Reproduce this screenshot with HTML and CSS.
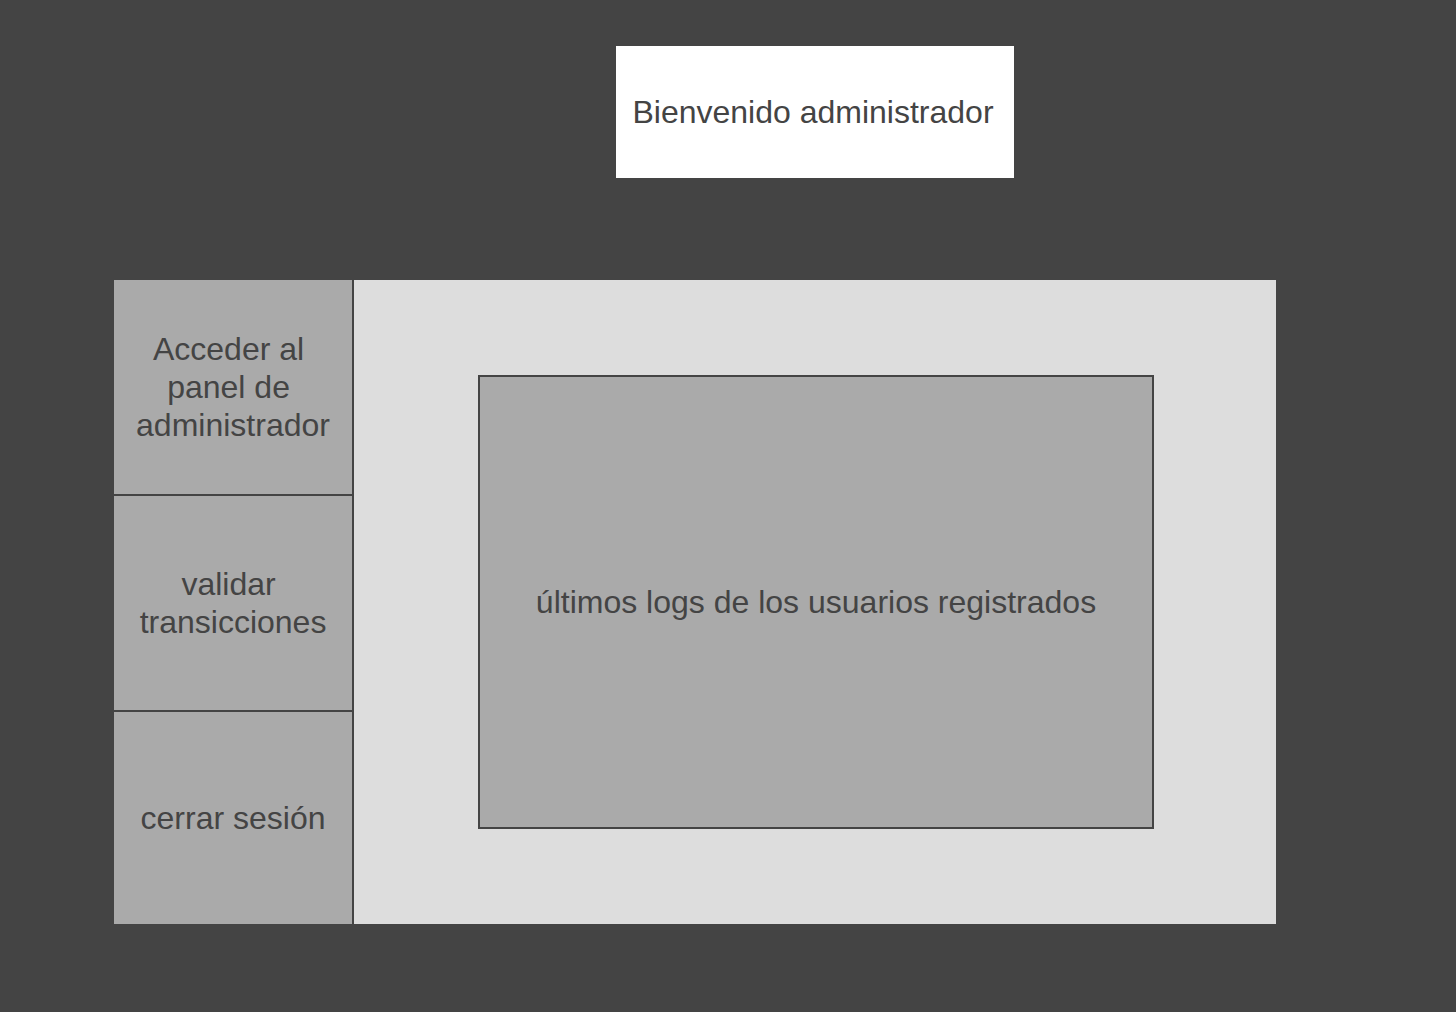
FILE: index.html
```html
<!DOCTYPE html>
<html>
<head>
    <title>Panel de administrador</title>
    <link rel="stylesheet" href="styles.css">
</head>
<body>
    <div class="page">
        <div class="welcome">Bienvenido administrador</div>

        <div class="panel">
            <div class="sidebar">
                <div class="side-item first">Acceder al panel de administrador</div>
                <div class="side-item">validar transicciones</div>
                <div class="side-item last">cerrar sesión</div>
            </div>
            <div class="content">
                <div class="logs">últimos logs de los usuarios registrados</div>
            </div>
        </div>
    </div>
</body>
</html>
```
FILE: styles.css
```css
body {
    margin: 0;
    background-color: #444444;
    font-family: "Liberation Sans", Arial, sans-serif;
    color: #444444;
}

.page {
    padding-top: 46px;
    height: 966px;
}

.welcome {
    box-sizing: border-box;
    width: 398px;
    height: 132px;
    margin-left: 616px;
    padding-right: 4px;
    background-color: #ffffff;
    font-size: 32px;
    display: flex;
    align-items: center;
    justify-content: center;
}

.panel {
    display: flex;
    width: 1162px;
    height: 644px;
    margin-top: 102px;
    margin-left: 114px;
    background-color: #dddddd;
}

.sidebar {
    width: 238px;
    border-right: 2px solid #444444;
    background-color: #aaaaaa;
    display: flex;
    flex-direction: column;
}

.side-item {
    box-sizing: border-box;
    height: 216px;
    display: flex;
    align-items: center;
    justify-content: center;
    text-align: center;
    padding: 0 16px;
    font-size: 32px;
    line-height: 38px;
    white-space: break-spaces;
    border-top: 2px solid #444444;
}

.side-item.first {
    height: 214px;
    border-top: none;
}

.side-item.last {
    height: 214px;
}

.content {
    flex: 1;
    padding-top: 95px;
    padding-left: 124px;
}

.logs {
    box-sizing: border-box;
    width: 676px;
    height: 454px;
    border: 2px solid #444444;
    background-color: #aaaaaa;
    font-size: 32px;
    display: flex;
    align-items: center;
    justify-content: center;
}
```
